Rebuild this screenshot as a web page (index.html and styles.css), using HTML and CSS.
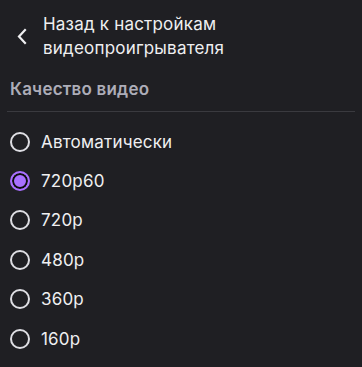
FILE: index.html
```html
<!DOCTYPE html>
<html lang="ru">
<head>
<meta charset="utf-8">
<link rel="stylesheet" href="styles.css">
</head>
<body>
<div class="panel">
  <div class="back">
    <span class="chev">
      <svg width="24" height="24" viewBox="0 0 24 24"><path d="M15 6 L9 12.5 L15 19" fill="none" stroke="#efeff1" stroke-width="2.2" stroke-linecap="square" stroke-linejoin="miter"/></svg>
    </span>
    <span class="back-text">Назад к настройкам<br>видеопроигрывателя</span>
  </div>
  <div class="heading">Качество видео</div>
  <div class="divider"></div>
  <ul class="list">
    <li class="item"><span class="radio"></span><span class="label">Автоматически</span></li>
    <li class="item"><span class="radio checked"></span><span class="label">720p60</span></li>
    <li class="item"><span class="radio"></span><span class="label">720p</span></li>
    <li class="item"><span class="radio"></span><span class="label">480p</span></li>
    <li class="item"><span class="radio"></span><span class="label">360p</span></li>
    <li class="item"><span class="radio"></span><span class="label">160p</span></li>
  </ul>
</div>
</body>
</html>
```
FILE: styles.css
```css
html, body {
  margin: 0;
  padding: 0;
  background: #1f1f23;
}
body {
  font-family: Inter, "Noto Sans", sans-serif;
  color: #efeff1;
  font-size: 17px;
  letter-spacing: 0.2px;
}
.panel {
  padding: 12px 10px 0 10px;
}
.back {
  display: flex;
  align-items: center;
}
.chev {
  width: 24px;
  height: 24px;
  margin-right: 9px;
  display: flex;
}
.back-text {
  line-height: 24px;
}
.heading {
  margin-top: 17px;
  line-height: 24px;
  font-weight: 600;
  color: #adadb8;
}
.divider {
  margin: 10px -3px 0 -3px;
  height: 1px;
  background: #3a3a3f;
}
.list {
  list-style: none;
  margin: 10px 0 0 0;
  padding: 0;
}
.item {
  display: flex;
  align-items: center;
  height: 39.4px;
}
.radio {
  box-sizing: border-box;
  width: 20px;
  height: 20px;
  border-radius: 50%;
  border: 2px solid #dedee3;
  margin-right: 11px;
  flex: none;
}
.radio.checked {
  border-color: #a970ff;
  background: #a970ff;
  box-shadow: inset 0 0 0 2px #0e0e10;
}
.label {
  line-height: 24px;
}
```
